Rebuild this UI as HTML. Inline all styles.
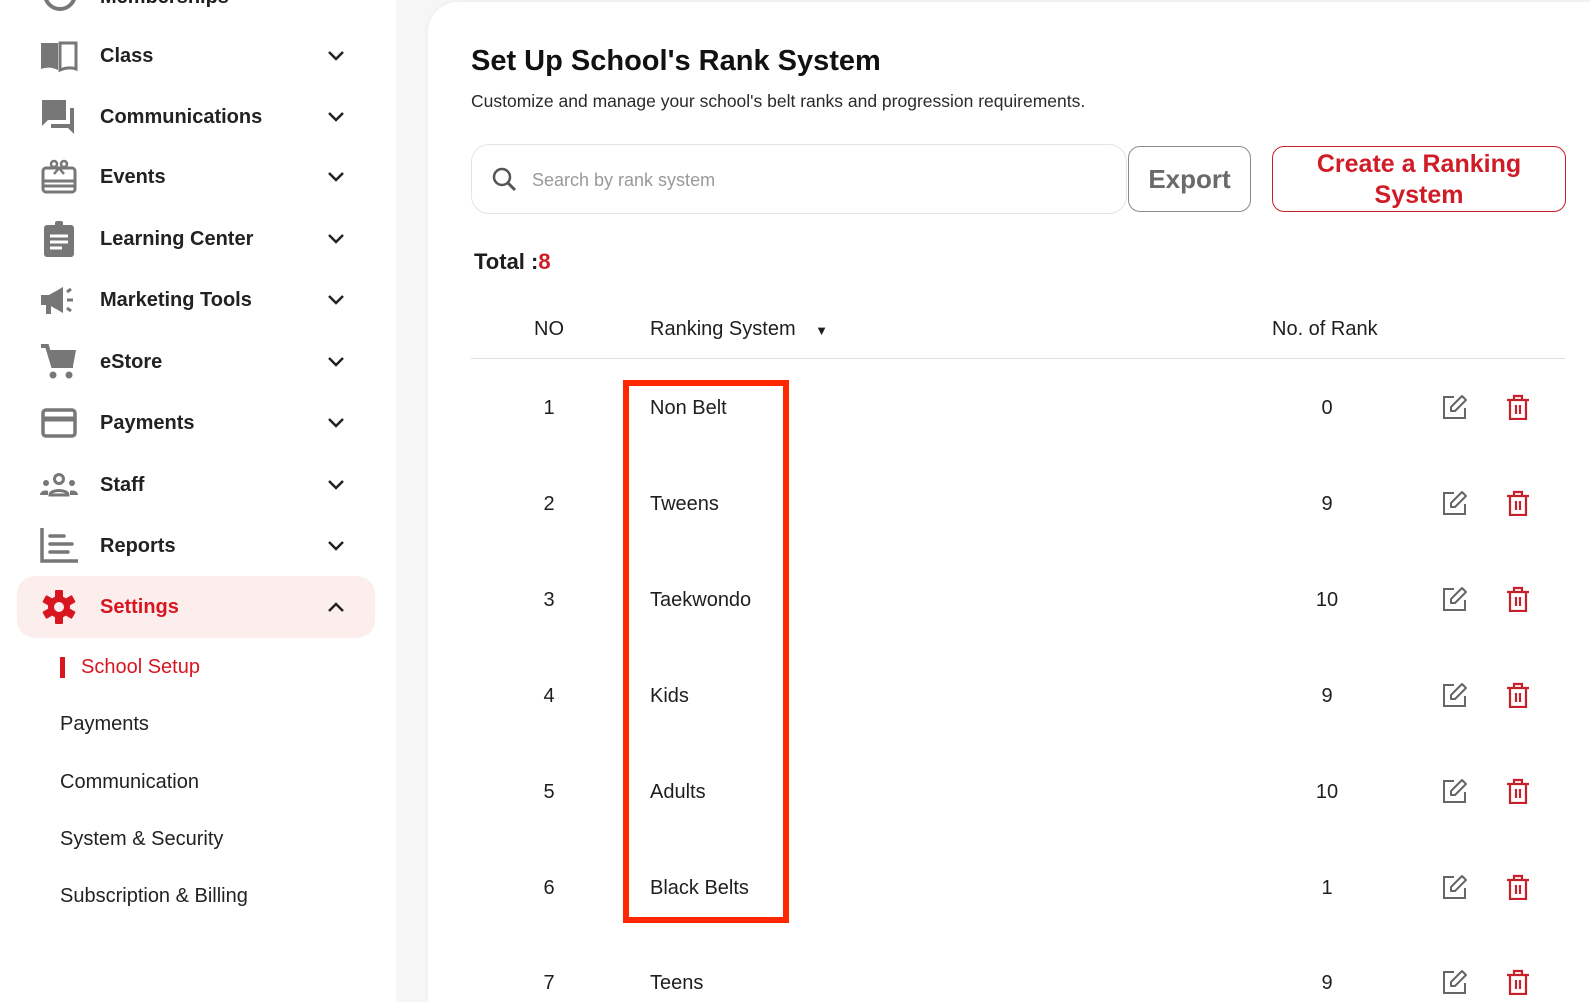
<!DOCTYPE html>
<html><head><meta charset="utf-8"><style>
*{box-sizing:border-box;margin:0;padding:0}
html{width:1590px;height:1002px;overflow:hidden}
body{width:1590px;height:1002px;overflow:hidden;background:#f6f6f6;font-family:"Liberation Sans",sans-serif;color:#1e1e1e;position:relative}
.side{position:absolute;left:0;top:0;width:396px;height:1002px;background:#fff}
.it{position:absolute;left:0;width:396px;height:40px;display:flex;align-items:center}
.it svg.ic{position:absolute;left:40px;top:1px;width:38px;height:38px}
.it span{position:absolute;left:100px;font-size:20px;font-weight:700;color:#222;line-height:40px}
.it .ch{position:absolute;left:326px;top:12px;width:20px;height:16px}
.sub{position:absolute;left:60px;font-size:20px;color:#222;line-height:30px}
.card{position:absolute;left:428px;top:2px;width:1162px;height:1000px;background:#fff;border-radius:30px 0 0 0;box-shadow:0 0 6px rgba(0,0,0,.05)}
.a{position:absolute}
.row{position:absolute;left:0;width:1590px;height:30px;font-size:20px;line-height:30px}
.row .n{position:absolute;left:519px;width:60px;text-align:center}
.row .r{position:absolute;left:650px}
.row .k{position:absolute;left:1297px;width:60px;text-align:center}
.row svg{position:absolute}
</style></head><body>
<div class="side">
 <svg class="a" style="left:42px;top:-20px" width="36" height="34" viewBox="0 0 36 34"><circle cx="18" cy="14" r="15" fill="none" stroke="#777" stroke-width="4"/></svg>
 <div class="a" style="left:100px;top:-14px;font-size:20px;font-weight:700">Memberships</div>

 <div class="it" style="top:36px"><svg class="ic" viewBox="0 0 38 38"><path d="M1 6h17v27c-6-3-11-3-17-1z" fill="#777"/><path d="M20 6h16v26c-5-2-11-1-16 1z" fill="none" stroke="#777" stroke-width="3"/></svg><span>Class</span><svg class="ch" viewBox="0 0 20 16"><path d="M3 4l7 7 7-7" fill="none" stroke="#222" stroke-width="2.5"/></svg></div>
 <div class="it" style="top:97px"><svg class="ic" viewBox="0 0 38 38"><path d="M2 2h24v20H8l-6 6z" fill="#777"/><path d="M30 10h4v26l-6-6H11v-4h19z" fill="#777"/></svg><span>Communications</span><svg class="ch" viewBox="0 0 20 16"><path d="M3 4l7 7 7-7" fill="none" stroke="#222" stroke-width="2.5"/></svg></div>
 <div class="it" style="top:157px"><svg class="ic" viewBox="0 0 38 38"><rect x="3" y="10" width="32" height="24" rx="3" fill="none" stroke="#777" stroke-width="3"/><path d="M3 23h32M4 28h30" stroke="#777" stroke-width="3"/><circle cx="14" cy="6" r="3" fill="none" stroke="#777" stroke-width="2.5"/><circle cx="24" cy="6" r="3" fill="none" stroke="#777" stroke-width="2.5"/><path d="M14 16l5-6 5 6" fill="none" stroke="#777" stroke-width="2.5"/></svg><span>Events</span><svg class="ch" viewBox="0 0 20 16"><path d="M3 4l7 7 7-7" fill="none" stroke="#222" stroke-width="2.5"/></svg></div>
 <div class="it" style="top:219px"><svg class="ic" viewBox="0 0 38 38"><rect x="4" y="5" width="30" height="32" rx="3" fill="#777"/><rect x="15" y="1" width="8" height="7" rx="2" fill="#777"/><path d="M10 16h18M10 22h18M10 28h12" stroke="#fff" stroke-width="3"/></svg><span>Learning Center</span><svg class="ch" viewBox="0 0 20 16"><path d="M3 4l7 7 7-7" fill="none" stroke="#222" stroke-width="2.5"/></svg></div>
 <div class="it" style="top:280px"><svg class="ic" viewBox="0 0 38 38"><path d="M1 14h8l14-8v26l-14-8H1z" fill="#777"/><path d="M6 24h5v9H6z" fill="#777"/><path d="M27 19h6M27 11l4-3M27 27l4 3" stroke="#777" stroke-width="3"/></svg><span>Marketing Tools</span><svg class="ch" viewBox="0 0 20 16"><path d="M3 4l7 7 7-7" fill="none" stroke="#222" stroke-width="2.5"/></svg></div>
 <div class="it" style="top:342px"><svg class="ic" viewBox="0 0 38 38"><path d="M1 3h6l6 20h20l3-16H10" fill="#777"/><path d="M1 3h6l6 20h20" fill="none" stroke="#777" stroke-width="4"/><circle cx="13" cy="32" r="3.5" fill="#777"/><circle cx="29" cy="32" r="3.5" fill="#777"/></svg><span>eStore</span><svg class="ch" viewBox="0 0 20 16"><path d="M3 4l7 7 7-7" fill="none" stroke="#222" stroke-width="2.5"/></svg></div>
 <div class="it" style="top:403px"><svg class="ic" viewBox="0 0 38 38"><rect x="3" y="6" width="32" height="26" rx="3" fill="none" stroke="#777" stroke-width="3.5"/><path d="M3 15h32" stroke="#777" stroke-width="5"/></svg><span>Payments</span><svg class="ch" viewBox="0 0 20 16"><path d="M3 4l7 7 7-7" fill="none" stroke="#222" stroke-width="2.5"/></svg></div>
 <div class="it" style="top:465px"><svg class="ic" viewBox="0 0 38 38"><circle cx="19" cy="13" r="4.5" fill="none" stroke="#777" stroke-width="3"/><circle cx="6" cy="17" r="3" fill="#777"/><circle cx="32" cy="17" r="3" fill="#777"/><path d="M10 29c0-6 18-6 18 0z" fill="none" stroke="#777" stroke-width="3"/><path d="M0 29c0-5 7-5 8-4v4zM38 29c0-5-7-5-8-4v4z" fill="#777"/></svg><span>Staff</span><svg class="ch" viewBox="0 0 20 16"><path d="M3 4l7 7 7-7" fill="none" stroke="#222" stroke-width="2.5"/></svg></div>
 <div class="it" style="top:526px"><svg class="ic" viewBox="0 0 38 38"><path d="M2 1v33h36" fill="none" stroke="#777" stroke-width="3.5"/><path d="M10 9h14M10 17h22M10 25h18" stroke="#777" stroke-width="3.5" stroke-linecap="round"/></svg><span>Reports</span><svg class="ch" viewBox="0 0 20 16"><path d="M3 4l7 7 7-7" fill="none" stroke="#222" stroke-width="2.5"/></svg></div>
 <div class="a" style="left:17px;top:576px;width:358px;height:62px;background:#fdeeee;border-radius:18px"></div>
 <div class="it" style="top:587px"><svg class="ic" viewBox="0 0 38 38"><g fill="#d7161f" transform="translate(19 19)"><circle r="11"/><g id="t"><rect x="-4" y="-17" width="8" height="8" rx="1"/></g><use href="#t" transform="rotate(60)"/><use href="#t" transform="rotate(120)"/><use href="#t" transform="rotate(180)"/><use href="#t" transform="rotate(240)"/><use href="#t" transform="rotate(300)"/></g><circle cx="19" cy="19" r="5" fill="#fdeeee"/></svg><span style="color:#d7161f">Settings</span><svg class="ch" viewBox="0 0 20 16"><path d="M3 12l7-7 7 7" fill="none" stroke="#222" stroke-width="2.5"/></svg></div>
 <div class="a" style="left:60px;top:657px;width:5px;height:21px;background:#d7161f"></div>
 <div class="sub" style="left:81px;top:652px;color:#d7161f">School Setup</div>
 <div class="sub" style="top:709px">Payments</div>
 <div class="sub" style="top:767px">Communication</div>
 <div class="sub" style="top:824px">System &amp; Security</div>
 <div class="sub" style="top:881px">Subscription &amp; Billing</div>
</div>

<div class="card"></div>
<div class="a" style="left:471px;top:45px;font-size:29px;font-weight:700;color:#111">Set Up School's Rank System</div>
<div class="a" style="left:471px;top:91px;font-size:17.5px;color:#2a2a2a">Customize and manage your school's belt ranks and progression requirements.</div>
<div class="a" style="left:471px;top:144px;width:656px;height:70px;border:1px solid #e4e4e4;border-radius:18px"></div>
<svg class="a" style="left:491px;top:166px" width="28" height="28" viewBox="0 0 28 28"><circle cx="11" cy="11" r="8" fill="none" stroke="#555" stroke-width="2.5"/><path d="M17 17l7 7" stroke="#555" stroke-width="3"/></svg>
<div class="a" style="left:532px;top:170px;font-size:18px;color:#999">Search by rank system</div>
<div class="a" style="left:1128px;top:146px;width:123px;height:66px;border:1px solid #8a8a8a;border-radius:12px;font-size:26px;color:#6a6a6a;text-align:center;line-height:64px;font-weight:600">Export</div>
<div class="a" style="left:1272px;top:146px;width:294px;height:66px;border:1.5px solid #c8202a;border-radius:12px;font-size:25px;color:#d01c26;text-align:center;line-height:31px;font-weight:600;padding-top:2px">Create a Ranking<br>System</div>
<div class="a" style="left:474px;top:249px;font-size:22px;font-weight:600">Total :<span style="color:#d01c26">8</span></div>

<div class="row" style="top:314px"><div class="n">NO</div><div class="r">Ranking System <span style="font-size:13px;margin-left:14px">&#9660;</span></div><div class="a" style="left:1272px">No. of Rank</div></div>
<div class="a" style="left:471px;top:358px;width:1094px;height:1px;background:#e0e0e0"></div>

<div class="a" style="left:623px;top:380px;width:166px;height:543px;border:6px solid #ff2600"></div>

<div id="rows"></div>
<script>
var d=[["1","Non Belt","0"],["2","Tweens","9"],["3","Taekwondo","10"],["4","Kids","9"],["5","Adults","10"],["6","Black Belts","1"],["7","Teens","9"]];
var h="";
d.forEach(function(r,i){var y=393+i*95.9;
h+='<div class="row" style="top:'+y+'px"><div class="n">'+r[0]+'</div><div class="r">'+r[1]+'</div><div class="k">'+r[2]+'</div>'+
'<svg style="left:1442px;top:1px" width="26" height="26" viewBox="0 0 26 26"><path d="M12 3H2v21h21V14" fill="none" stroke="#666" stroke-width="2"/><path d="M20 2l4 4-11 11H9v-4z" fill="none" stroke="#666" stroke-width="2" stroke-linejoin="round"/></svg>'+
'<svg style="left:1506px;top:1px" width="24" height="26" viewBox="0 0 24 26"><path d="M1 6h22M8 6V2h8v4M4 6v19h16V6" fill="none" stroke="#c8202a" stroke-width="2.2"/><path d="M10 11v9M14 11v9" stroke="#c8202a" stroke-width="2.2"/></svg></div>';});
document.getElementById("rows").innerHTML=h;
</script>
</body></html>
